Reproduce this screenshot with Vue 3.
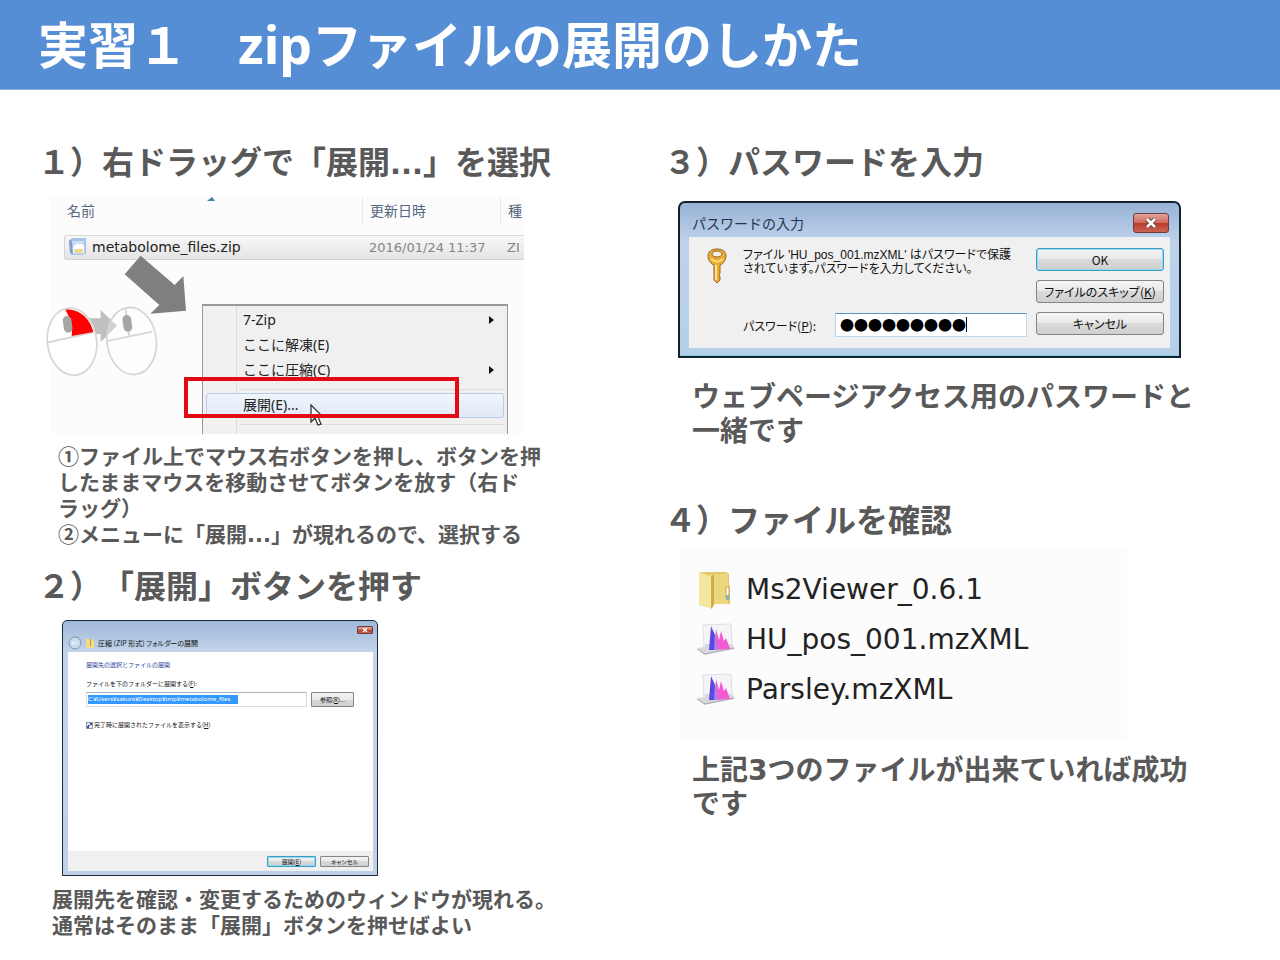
<script setup>
import { ref } from 'vue'

const password = ref('●●●●●●●●●')
const targetPath = ref('C:¥Users¥sakura¥Desktop¥tmp¥metabolome_files')
const showFiles = ref(true)
const files = [
  { name: 'Ms2Viewer_0.6.1', kind: 'folder' },
  { name: 'HU_pos_001.mzXML', kind: 'spectrum' },
  { name: 'Parsley.mzXML', kind: 'spectrum' },
]
</script>

<template>
  <main class="slide">
    <header class="banner">
      <h1>実習１　<span class="latin">zip</span>ファイルの展開のしかた</h1>
    </header>

    <div class="columns">
      <div class="column">
        <section>
          <h2>１）右ドラッグで「展開<span class="dots">...</span>」を選択</h2>
          <div class="explorer">
            <div class="clip">
              <table>
                <colgroup><col class="c-name"><col class="c-date"><col></colgroup>
                <thead>
                  <tr><th>名前</th><th>更新日時</th><th>種</th></tr>
                </thead>
                <tbody>
                  <tr>
                    <td class="file">
                      <svg width="20" height="20" viewBox="0 0 20 20" aria-hidden="true">
                        <path d="M1 3l4-2h13v15l-3 2H3z" fill="#a9c3e6" />
                        <path d="M3 4h13v13H4z" fill="#c9dcf3" />
                        <path d="M1 3l3 1 1 13-3-1z" fill="#7f9fd0" />
                        <path d="M5 10l3-3h6l2 2v7H5z" fill="#fff" />
                        <path d="M6 12h9v4H6z" fill="#ecd98f" />
                      </svg>
                      <span>metabolome_files.zip</span>
                    </td>
                    <td class="date">2016/01/24 11:37</td>
                    <td class="date">ZI</td>
                  </tr>
                </tbody>
              </table>
              <svg class="sort" width="8" height="4" viewBox="0 0 8 4" aria-hidden="true"><path d="M0 4L5 0l3 4z" fill="#4d7f9c" /></svg>
              <ul class="menu">
                <li><button type="button">7-Zip<i class="tri"></i></button></li>
                <li><button type="button">ここに解凍(E)</button></li>
                <li><button type="button">ここに圧縮(C)<i class="tri"></i></button></li>
                <li class="sep"></li>
                <li><button type="button" class="active">展開(E)...</button></li>
                <li class="sep"></li>
              </ul>
            </div>
            <svg class="gesture" viewBox="0 0 750 750" aria-hidden="true">
              <path d="M302 197L404 285L430 258L438 362L331 371L358 345L254 253z" fill="#7f7f7f" />
              <path d="M145 385H182V360L231 407L182 456V432H145z" fill="#bfbfbf" />
              <g fill="#fff" stroke="#d5d5d5" stroke-width="5">
                <ellipse cx="96" cy="455" rx="74" ry="101" transform="rotate(-7 96 455)" />
                <ellipse cx="275" cy="453" rx="74" ry="101" transform="rotate(-7 275 453)" fill-opacity=".3" />
                <path d="M24 457L160 427M203 453L337 425M256 354L260 378M265 422L268 438" fill="none" />
              </g>
              <path d="M76 359C118 356 150 385 160 426L95 438Q101 400 76 359z" fill="#f00" />
              <rect x="70" y="378" width="26" height="50" rx="13" fill="#a6a6a6" transform="rotate(-8 83 403)" />
              <rect x="249" y="375" width="26" height="50" rx="13" fill="#a6a6a6" transform="rotate(-8 262 400)" />
            </svg>
            <svg class="cursor" width="16" height="23" viewBox="0 0 16 23" aria-hidden="true">
              <path d="M1 1V18L5 14L8 21L11 20L8 13H13z" fill="#fff" stroke="#333" stroke-width="1.3" />
            </svg>
            <div class="highlight"></div>
          </div>
          <p class="note first">①ファイル上でマウス右ボタンを押し、ボタンを押<br>したままマウスを移動させてボタンを放す（右ド<br>ラッグ）<br>②メニューに「展開<span class="dots">...</span>」が現れるので、選択する</p>
        </section>

        <section>
          <h2>２）「展開」ボタンを押す</h2>
          <form class="wizard" @submit.prevent>
            <button type="button" class="close small" aria-label="閉じる"><svg width="6" height="4" viewBox="0 0 6 4"><path d="M1 0L5 4M5 0L1 4" stroke="#fff" stroke-width="1.4" /></svg></button>
            <div class="wizard-title">
              <svg width="14" height="14" viewBox="0 0 14 14" aria-hidden="true">
                <circle cx="7" cy="7" r="6" fill="#c9dcee" stroke="#8296ad" />
                <path d="M4 7H10M6 5L4 7L6 9" stroke="#f4f8fc" fill="none" />
              </svg>
              <svg width="8" height="10" viewBox="0 0 8 10" aria-hidden="true"><path d="M0 1h6l2 2v7H0z" fill="#f3dc83" /><path d="M4 1h1v7H4z" fill="#b99531" /></svg>
              <span>圧縮 (ZIP 形式) フォルダーの展開</span>
            </div>
            <div class="wizard-body">
              <h3>展開先の選択とファイルの展開</h3>
              <label for="dest">ファイルを下のフォルダーに展開する(<u>F</u>):</label>
              <div class="dest-row">
                <div class="dest"><input id="dest" v-model="targetPath" type="text"></div>
                <button type="button" class="btn browse">参照(<u>R</u>)...</button>
              </div>
              <label class="check"><input v-model="showFiles" type="checkbox"><span>完了時に展開されたファイルを表示する(<u>H</u>)</span></label>
            </div>
            <div class="wizard-foot">
              <button type="submit" class="btn primary">展開(<u>E</u>)</button>
              <button type="button" class="btn">キャンセル</button>
            </div>
          </form>
          <p class="note second">展開先を確認・変更するためのウィンドウが現れる。<br>通常はそのまま「展開」ボタンを押せばよい</p>
        </section>
      </div>

      <div class="column">
        <section>
          <h2>３）パスワードを入力</h2>
          <form class="dialog" @submit.prevent>
            <div class="dialog-title">
              <span>パスワードの入力</span>
              <button type="button" class="close" aria-label="閉じる"><svg width="14" height="12" viewBox="0 0 14 12"><path d="M3 2L11 10M11 2L3 10" stroke="#5b3a3c" stroke-width="4.5" /><path d="M3 2L11 10M11 2L3 10" stroke="#fff" stroke-width="2.6" /></svg></button>
            </div>
            <div class="dialog-body">
              <svg class="key" width="20" height="36" viewBox="0 0 20 36" aria-hidden="true">
                <path d="M10 1C4 1 1 4 1 8C1 12 4 16 7 17V32L10 35L13 32V29L12 27L13 25V17C16 16 19 12 19 8C19 4 16 1 10 1z" fill="#e9ad35" stroke="#996324" />
                <ellipse cx="10" cy="6" rx="5" ry="3" fill="#f3efe4" stroke="#996324" />
                <path d="M9 17V32" stroke="#ffe391" stroke-width="2" />
                <path d="M4 11Q10 16 16 11" stroke="#ffda72" stroke-width="2" fill="none" />
              </svg>
              <div class="dialog-main">
                <p>ファイル 'HU_pos_001.mzXML' はパスワードで保護<br>されています。パスワードを入力してください。</p>
                <div class="pw-row">
                  <label for="pw">パスワード(<u>P</u>):</label>
                  <div class="pw"><input id="pw" v-model="password" type="text"><i class="caret"></i></div>
                </div>
              </div>
              <div class="dialog-actions">
                <button type="submit" class="btn primary">OK</button>
                <button type="button" class="btn">ファイルのスキップ(<u>K</u>)</button>
                <button type="button" class="btn">キャンセル</button>
              </div>
            </div>
          </form>
          <p class="lead third">ウェブページアクセス用のパスワードと<br>一緒です</p>
        </section>

        <section>
          <h2>４）ファイルを確認</h2>
          <ul class="files">
            <li v-for="f in files" :key="f.name">
              <svg v-if="f.kind === 'folder'" width="38" height="40" viewBox="0 0 38 40" aria-hidden="true">
                <path d="M3 2h26l3 2v11l1 1v18H4z" fill="#e2c965" />
                <path d="M13 4h18v30H15z" fill="#ecd77c" />
                <path d="M2 2l14 5v32L2 35z" fill="#f3e69f" />
                <path d="M14 7l3-3v31l-3 4z" fill="#cfae43" />
                <path d="M29 17h3v12h-3z" fill="#fff" stroke="#c4a64a" />
                <path d="M29 25h3v5h-3z" fill="#81b5c6" />
              </svg>
              <svg v-else width="38" height="34" viewBox="0 0 38 34" aria-hidden="true">
                <path d="M6 2l28-1 1 23-28 2z" fill="#f5f5f8" stroke="#dedee4" />
                <path d="M0 25l8-1v-3h27l3 5-31 6z" fill="#d8d8e0" />
                <path d="M0 26l8 5 29-6" fill="none" stroke="#a8a8b0" />
                <path d="M12 27L14 3L18 12L19 27z" fill="#5a49e0" />
                <path d="M18 27L19 6L22 17L24 8L27 18L29 15L33 26z" fill="#f45bd2" />
                <path d="M17 27L18 9L21 27z" fill="#a684f0" />
              </svg>
              <span>{{ f.name }}</span>
            </li>
          </ul>
          <p class="lead fourth">上記<span class="dots">3</span>つのファイルが出来ていれば成功<br>です</p>
        </section>
      </div>
    </div>
  </main>
</template>

<style>
body { margin: 0; background: #fff; }
</style>

<style scoped>
* { box-sizing: border-box; }
.slide {
  min-height: 100vh;
  background: #fff;
  color: #595959;
  font-family: "Noto Sans CJK JP", sans-serif;
  text-spacing-trim: space-all;
}
.banner { height: 90px; padding: 0 38px 5px; display: flex; align-items: center; background: #558ed5; border-bottom: 1px solid #8aaede; }
h1, h2, h3, p, ul { margin: 0; padding: 0; }
ul { list-style: none; }
h1 { color: #fff; font-size: 50px; line-height: 80px; font-weight: 700; white-space: nowrap; }
.latin { font-family: "Noto Sans", sans-serif; font-size: 52px; line-height: 1; }
.dots { font-family: "DejaVu Sans", sans-serif; line-height: 1; }
h2 .dots { font-size: 29px; }
.columns { display: grid; grid-template-columns: 1fr 1fr; padding-top: 50px; }
.column:first-child { padding-left: 38px; }
.column:last-child { padding-left: 24px; }
h2 { font-size: 32px; line-height: 40px; font-weight: 700; white-space: nowrap; }
.note { font-size: 21px; line-height: 26px; font-weight: 700; white-space: nowrap; }
.lead { font-size: 28px; line-height: 34px; font-weight: 700; margin-left: 28px; white-space: nowrap; }
.first { margin: 8px 0 18px 20px; }
.second { margin: 9px 0 0 14px; }
.third { margin-top: 20px; margin-bottom: 52px; }
.fourth { margin-top: 10px; }
button, input { font-family: inherit; margin: 0; color: #111; }

/* file list with context menu */
.explorer { position: relative; width: 474px; margin: 17px 0 0 12px; }
.clip { position: relative; height: 237px; overflow: hidden; background: #fcfcfc; }
table { width: 100%; table-layout: fixed; border-collapse: separate; border-spacing: 0; }
.c-name { width: 312px; }
.c-date { width: 138px; }
th { height: 28px; padding: 0 0 2px 7px; text-align: left; font-size: 14px; line-height: 24px; font-weight: 400; color: #55667f; white-space: nowrap; border-left: 1px solid #e6e9ee; }
th:first-child { border-left: 0; padding-left: 17px; }
thead::after { content: ""; display: block; height: 10px; }
td { height: 25px; padding: 0 0 1px 7px; font-family: "DejaVu Sans", sans-serif; font-size: 13px; color: #858585; background: linear-gradient(#f8f8f8, #e4e4e4); border-top: 1px solid #dcdcdc; border-bottom: 1px solid #cfd3d8; white-space: nowrap; }
td.file { display: flex; align-items: center; gap: 4px; margin-left: 14px; padding-left: 3px; font-size: 14px; color: #222; border-left: 1px solid #d4d4d4; border-radius: 3px 0 0 3px; }
.sort { position: absolute; left: 157px; top: 0; }
.menu { position: absolute; left: 152px; top: 107px; width: 306px; height: 140px; padding-top: 2px; border: 2px solid #999; border-width: 2px 1px; background: linear-gradient(90deg, #f1f1f1 33px, #ddd 33px, #ddd 34px, #f0f0f0 34px); }
.menu button { position: relative; display: block; width: 298px; height: 25px; margin: 0 auto; padding: 0 0 1px 36px; border: 1px solid transparent; border-radius: 3px; background: none; text-align: left; font-size: 14px; line-height: 22px; color: #222; font-family: "Noto Sans", "Noto Sans CJK JP", sans-serif; }
.menu .active { background: linear-gradient(#f0f4fb, #e2eaf7); border-color: #b9cdea; }
.sep { height: 1px; margin: 6px 3px 3px 36px; background: #dcdcdc; }
.tri { position: absolute; right: 9px; top: 7px; border: 4px solid transparent; border-left: 5px solid #111; border-right: 0; }
.gesture { position: absolute; left: -10px; top: -7px; width: 250px; height: 250px; }
.cursor { position: absolute; left: 260px; top: 207px; }
.highlight { position: absolute; left: 134px; top: 180px; width: 275px; height: 41px; border: 4px solid #e30b13; }

/* shared window controls */
.btn { padding: 0; border: 1px solid #858585; border-radius: 3px; background: linear-gradient(#f4f4f4, #e9e9e9 50%, #dadada 50%, #cfcfcf); font-feature-settings: "palt"; text-align: center; white-space: nowrap; }
.btn.primary { border-color: #3c9cc4; box-shadow: inset 0 0 0 1px #8edcf5; }
.close { display: flex; align-items: center; justify-content: center; width: 36px; height: 20px; padding: 0; border: 1px solid #6f3a40; border-radius: 3px; background: linear-gradient(#e0a49b, #cf6a5c 48%, #b93a2a 50%, #cb6355); }
.small { width: 16px; height: 8px; border-radius: 1px; }

/* extraction wizard */
.wizard { width: 316px; margin: 16px 0 0 24px; padding: 5px 4px 4px 5px; border: 1px solid #1e2a3c; border-radius: 5px 5px 0 0; background: linear-gradient(#9fb9da, #c3d5ea 32px, #bed1e8); font-size: 6px; color: #111; }
.wizard .close { margin-left: auto; }
.wizard-title { display: flex; align-items: center; gap: 4px; height: 18px; font-size: 7px; line-height: 10px; font-feature-settings: "palt"; }
.wizard-body { height: 199px; padding: 8px 19px 0 18px; background: #fff; }
.wizard h3 { font-size: 6px; line-height: 10px; font-weight: 400; color: #1d3c98; }
.wizard label { display: block; line-height: 10px; margin-top: 9px; }
.dest-row { display: flex; gap: 4px; margin-top: 3px; }
.dest { flex: 1; display: flex; align-items: center; height: 15px; padding: 0 1px; border: 1px solid #d3dce6; border-top-color: #aab4c0; }
.dest input { width: 150px; height: 9px; padding: 0; border: 0; outline: 0; background: #3399ff; color: #fff; font-size: 6px; line-height: 9px; font-family: "Noto Sans", "Noto Sans CJK JP", sans-serif; }
.wizard .btn { font-size: 6px; line-height: 8px; border-radius: 1px; }
.wizard .browse { width: 43px; height: 15px; }
.wizard .check { display: flex; align-items: center; gap: 1px; margin-top: 13px; }
.check input { appearance: none; width: 7px; height: 7px; border: 1px solid #8a93a3; background: linear-gradient(135deg, #e9edf5 40%, #3d4f8c 40%, #3d4f8c 60%, #e9edf5 60%); }
.check input:not(:checked) { background: #fff; }
.wizard-foot { display: flex; justify-content: flex-end; gap: 4px; height: 20px; padding: 5px 4px 0 0; background: #f0f0f0; }
.wizard-foot .btn { width: 49px; height: 11px; }

/* password dialog */
.dialog { width: 503px; margin: 21px 0 0 14px; padding: 0 9px 8px; border: 2px solid #14222e; border-radius: 7px 7px 0 0; background: linear-gradient(#98b3d6, #bdd1ea 38px, #b6cfea); box-shadow: inset 0 -1px 0 0 #7fd4e4; color: #111; }
.dialog-title { display: flex; align-items: center; justify-content: space-between; height: 34px; padding: 5px 1px 0 3px; font-size: 14px; line-height: 20px; color: #24364d; }
.dialog-body { display: flex; height: 111px; padding: 11px 6px 0 18px; background: #f0f0f0; font-feature-settings: "palt"; font-size: 12px; }
.dialog-main { flex: 1; padding-left: 16px; }
.dialog-main p { line-height: 14px; white-space: nowrap; font-family: "Liberation Sans", "Noto Sans CJK JP", sans-serif; }
.pw-row { display: flex; align-items: center; margin-top: 37px; margin-right: 9px; }
.pw-row label { width: 92px; }
.pw { position: relative; flex: 1; }
.pw input { display: block; width: 100%; height: 24px; padding: 0 4px 2px; border: 1px solid #bed6ea; border-top-color: #5794bf; outline: 0; font-size: 14px; background: #fff; color: #000; }
.caret { position: absolute; left: 131px; top: 4px; width: 1px; height: 15px; background: #000; }
.dialog-actions { display: flex; flex-direction: column; gap: 9px; width: 128px; }
.dialog-actions .btn { height: 23px; font-size: 12px; line-height: 19px; }

/* result files */
.files { width: 447px; height: 192px; margin: 11px 0 0 16px; padding: 16px 0 0 17px; background: #fcfcfc; }
.files li { display: flex; align-items: center; gap: 11px; height: 50px; font-family: "DejaVu Sans", sans-serif; font-size: 28px; line-height: 34px; color: #222; }
</style>
